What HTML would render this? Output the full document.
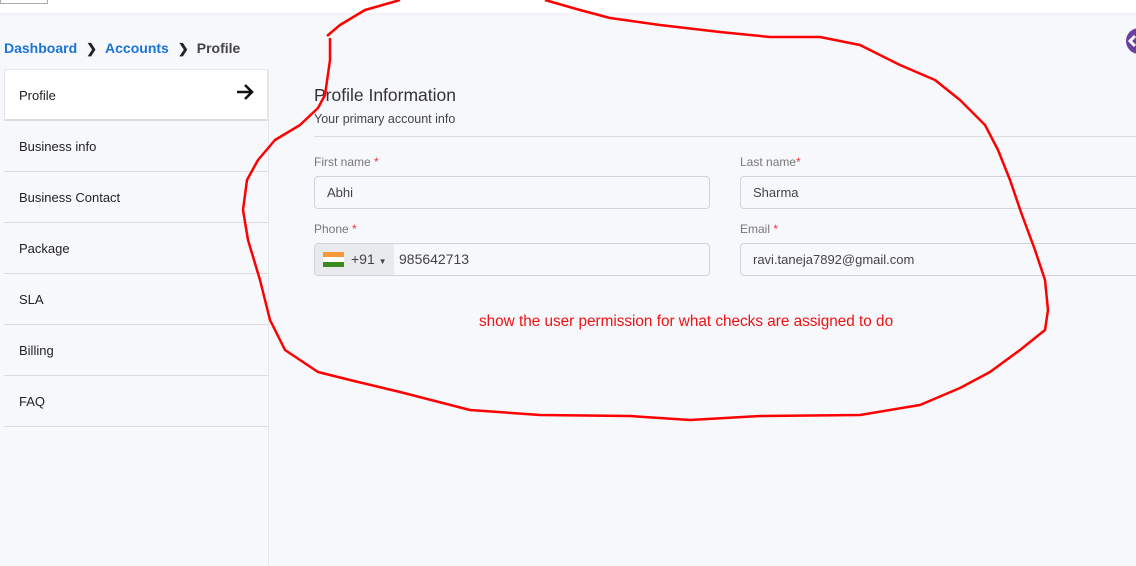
<!DOCTYPE html>
<html><head><meta charset="utf-8"><style>
*{box-sizing:border-box;margin:0;padding:0}
body{width:1136px;height:566px;overflow:hidden;background:#f7f8fc;font-family:"Liberation Sans",sans-serif;position:relative;color:#333}
.top{position:absolute;left:0;top:0;width:1136px;height:13px;background:#fff;box-shadow:0 1px 3px rgba(0,0,0,.05)}
.tb{position:absolute;left:0;top:0;width:48px;height:4px;border:1px solid #aaa;border-top:none;background:#fff}
.bc{position:absolute;left:4px;top:40px;font-size:14px;font-weight:bold}
.bc a{color:#1a73d6}
.bc .s{color:#222;margin:0 8px 0 9px;font-size:13px}
.bc .c{color:#444}
.side{position:absolute;left:4px;top:69px;width:265px;height:497px;border-right:1px solid #e5e6ea}
.item{height:51px;border-bottom:1px solid #ddd;padding-left:15px;font-size:13px;line-height:51px;color:#222}
.item.act{background:#fff;height:52px;border:1px solid #e5e6ea;border-bottom:2px solid #ddd;position:relative;padding-left:14px}
.arr{position:absolute;right:12px;top:12px}
h2{position:absolute;left:314px;top:85px;font-size:17.5px;font-weight:normal;color:#333}
.sub{position:absolute;left:314px;top:112px;font-size:12.5px;color:#444}
.hr{position:absolute;left:314px;top:136px;width:822px;border-top:1px solid #ddd}
.lbl{position:absolute;font-size:12px;color:#777}
.lbl i{color:#e33;font-style:normal}
.inp{position:absolute;height:33px;border:1px solid #d0d3da;border-radius:4px;background:#f7f8fc;font-size:13px;color:#444;line-height:31px;padding-left:12px}
.msg{position:absolute;left:479px;top:313px;font-size:15.3px;color:#e11}
</style></head><body>
<div class="top"></div><div class="tb"></div>
<div class="bc"><a>Dashboard</a><span class="s">❯</span><a>Accounts</a><span class="s">❯</span><span class="c">Profile</span></div>
<div class="side">
<div class="item act">Profile<svg class="arr" width="20" height="20" viewBox="0 0 20 20"><path d="M2 10H17M10 3L17 10L10 17" fill="none" stroke="#111" stroke-width="2.6"/></svg></div>
<div class="item">Business info</div>
<div class="item">Business Contact</div>
<div class="item">Package</div>
<div class="item">SLA</div>
<div class="item">Billing</div>
<div class="item">FAQ</div>
</div>
<h2>Profile Information</h2>
<div class="sub">Your primary account info</div>
<div class="hr"></div>
<div class="lbl" style="left:314px;top:155px">First name <i>*</i></div>
<div class="lbl" style="left:740px;top:155px">Last name<i>*</i></div>
<div class="inp" style="left:314px;top:176px;width:396px">Abhi</div>
<div class="inp" style="left:740px;top:176px;width:400px">Sharma</div>
<div class="lbl" style="left:314px;top:222px">Phone <i>*</i></div>
<div class="lbl" style="left:740px;top:222px">Email <i>*</i></div>
<div class="inp" style="left:314px;top:243px;width:396px;padding-left:0;overflow:hidden">
<span style="display:inline-block;width:79px;height:31px;background:#e9eaee;vertical-align:top;position:relative">
<span style="position:absolute;left:8px;top:8px;width:21px;height:15px;background:linear-gradient(#f7993a 33%,#fff 33%,#fff 66%,#3a8a1e 66%)"></span>
<span style="position:absolute;left:36px;top:0;font-size:14px">+91 <span style="font-size:8px">▼</span></span></span><span style="padding-left:5px;font-size:14px">985642713</span></div>
<div class="inp" style="left:740px;top:243px;width:400px">ravi.taneja7892@gmail.com</div>
<div class="msg">show the user permission for what checks are assigned to do</div>
<div style="position:absolute;left:1126px;top:28px;width:26px;height:26px;border-radius:50%;background:#6a3fa0"></div>
<svg style="position:absolute;left:1126px;top:28px" width="10" height="26"><path d="M9 8L4 13L9 18" fill="none" stroke="#fff" stroke-width="3"/></svg>
<svg style="position:absolute;left:0;top:0" width="1136" height="566"><g fill="none" stroke="#f00" stroke-width="2.5" stroke-linejoin="round">
<polyline points="327,36 340,25 365,10 400,0"/>
<polyline points="330,38 330,60 325,95 318,108 300,125 275,140 258,160 247,180 243,210 248,240 260,280 270,320 285,350 318,372 350,380 400,392 470,410 540,415 630,416 690,420 760,416 860,415 920,405 960,388 990,372 1020,350 1045,330 1048,310 1045,280 1035,250 1022,215 1010,180 998,150 985,125 960,100 935,80 900,65 860,45 820,37 770,37 720,32 660,25 610,18 580,10 545,0"/>
</g></svg>
</body></html>
